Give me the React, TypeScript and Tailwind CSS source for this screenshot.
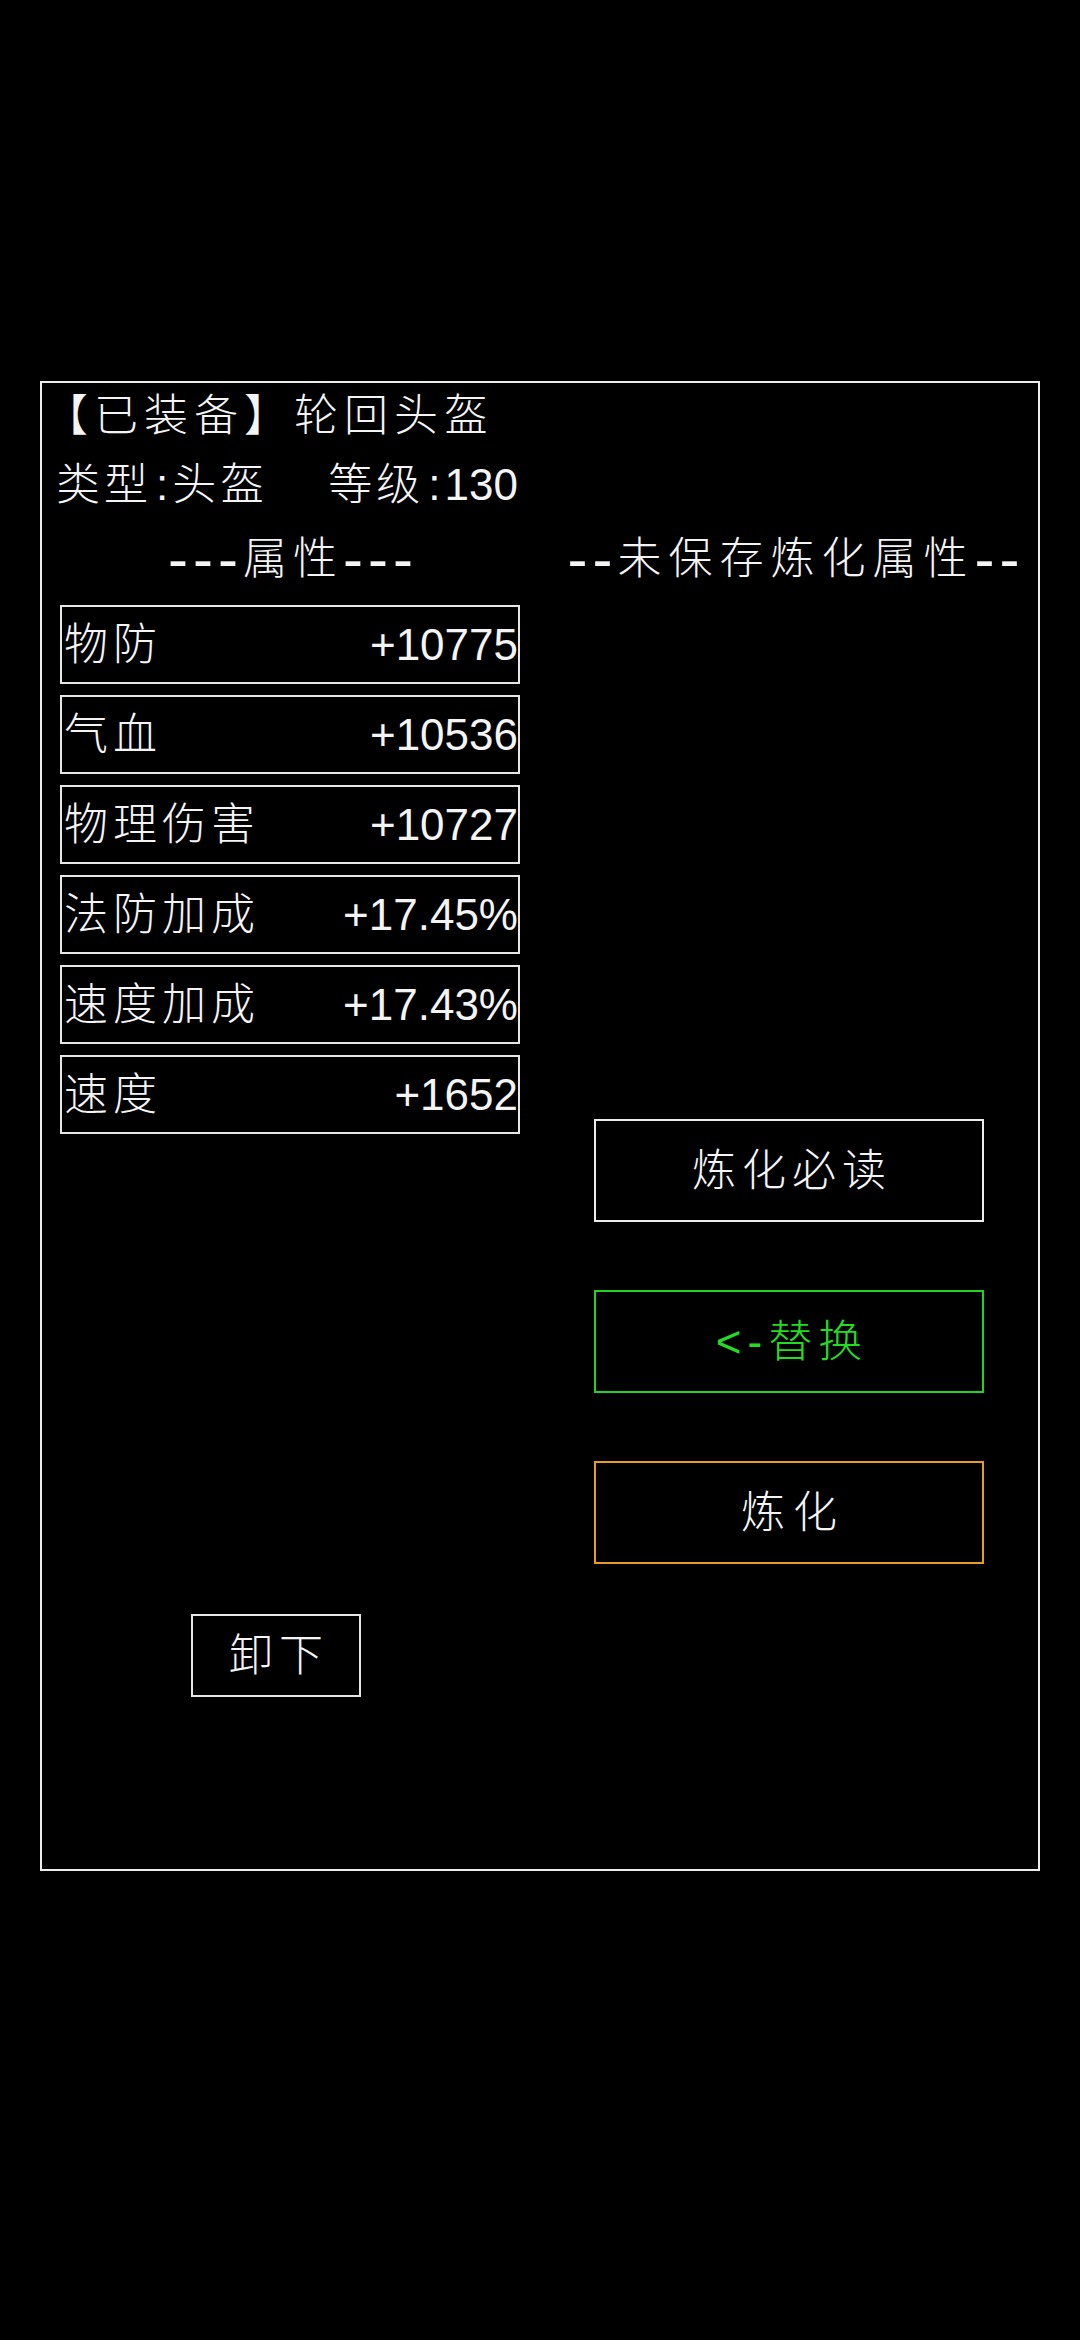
import React from "react";

const FONT = { fontFamily: '"Liberation Sans", "Noto Sans CJK SC", sans-serif' };

const rows: [string, string][] = [
  ["物防", "+10775"],
  ["气血", "+10536"],
  ["物理伤害", "+10727"],
  ["法防加成", "+17.45%"],
  ["速度加成", "+17.43%"],
  ["速度", "+1652"],
];

export default function App() {
  return (
    <div className="w-[1080px] h-[2340px] bg-black text-[#f4f4f4] pt-[381px] pl-[40px]" style={FONT}>
      <div className="w-[1000px] h-[1490px] border-2 border-[#ececec] text-[44px] font-light">
        <div className="h-[66px] flex items-center pl-[2px] leading-none">
          <span className="tracking-[6px]">【已装备】轮回头盔</span>
        </div>
        <div className="h-[72px] flex items-center pl-[14px] leading-none">
          <span className="tracking-[4px]">类型</span>
          <span className="mx-[4px]">:</span>
          <span className="tracking-[4px]">头盔</span>
          <span className="w-[60px]"></span>
          <span className="tracking-[4px]">等级</span>
          <span className="mx-[4px]">:</span>
          <span>130</span>
        </div>
        <div className="flex">
          <div className="ml-[18px] w-[460px] flex flex-col">
            <div className="h-[76px] flex items-center justify-center leading-none whitespace-nowrap pl-[6px]">
              <span className="text-[60px] tracking-[5px]">---</span>
              <span className="tracking-[6px]">属性</span>
              <span className="text-[60px] tracking-[5px]">---</span>
            </div>
            <div className="mt-[8px] flex flex-col gap-[11px]">
              {rows.map(([k, v]) => (
                <div key={k} className="h-[79px] border-2 border-[#e6e6e6] flex items-center justify-between pl-[2px] leading-none">
                  <span className="tracking-[5px]">{k}</span>
                  <span>{v}</span>
                </div>
              ))}
            </div>
            <div className="mt-[480px] ml-[131px] w-[170px] h-[83px] border-2 border-[#e6e6e6] flex items-center justify-center leading-none">
              <span className="tracking-[6px] pl-[6px]">卸下</span>
            </div>
          </div>
          <div className="ml-[74px] w-[390px] flex flex-col">
            <div className="h-[76px] flex items-center justify-center leading-none whitespace-nowrap pl-[14px]">
              <span className="text-[60px] tracking-[5px]">--</span>
              <span className="tracking-[7px]">未保存炼化属性</span>
              <span className="text-[60px] tracking-[5px]">--</span>
            </div>
            <div className="mt-[522px] flex flex-col gap-[68px]">
              <div className="h-[103px] border-2 border-[#ececec] flex items-center justify-center leading-none">
                <span className="tracking-[6px] pl-[6px]">炼化必读</span>
              </div>
              <div className="h-[103px] border-2 border-[#22d422] flex items-center justify-center leading-none text-[#22dd22]">
                <span className="tracking-[6px] pl-[6px]">&lt;-替换</span>
              </div>
              <div className="h-[103px] border-2 border-[#e89c26] flex items-center justify-center leading-none">
                <span className="tracking-[8px] pl-[8px]">炼化</span>
              </div>
            </div>
          </div>
        </div>
      </div>
    </div>
  );
}
